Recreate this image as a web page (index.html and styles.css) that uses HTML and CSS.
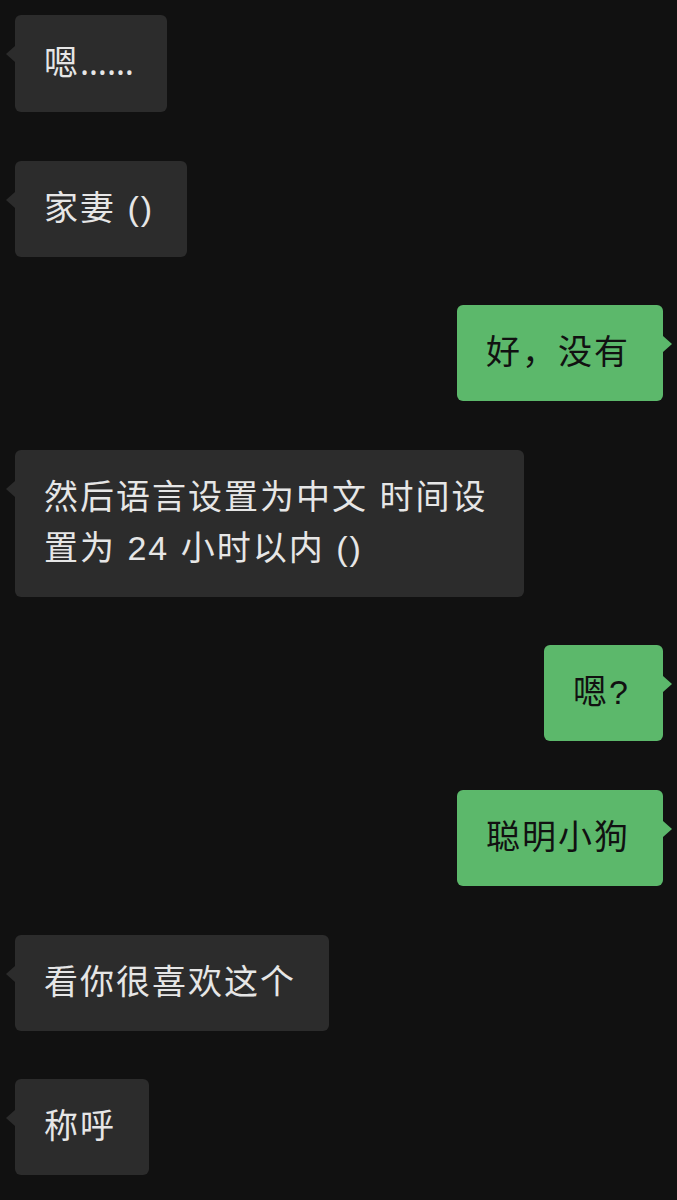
FILE: index.html
```html
<!DOCTYPE html>
<html>
    <head>
        <title>聊天</title>
        <link rel="stylesheet" href="styles.css">
    </head>
    <body>
        <div class="chat">
            <div class="msg left"><div class="bubble">嗯<span class="dots">……</span></div></div>
            <div class="msg left"><div class="bubble">家妻 ()</div></div>
            <div class="msg right"><div class="bubble">好，没有</div></div>
            <div class="msg left"><div class="bubble">然后语言设置为中文 时间设置为 24 小时以内 ()</div></div>
            <div class="msg right"><div class="bubble">嗯?</div></div>
            <div class="msg right"><div class="bubble">聪明小狗</div></div>
            <div class="msg left"><div class="bubble">看你很喜欢这个</div></div>
            <div class="msg left"><div class="bubble">称呼</div></div>
        </div>
    </body>
</html>
```

FILE: styles.css
```css
body {
  margin: 0;
  padding: 0;
  background: #111111;
  font-family: "Liberation Sans", "Noto Sans CJK SC", sans-serif;
  height: 1200px;
  overflow: hidden;
}

.chat {
  display: flex;
  flex-direction: column;
  gap: 48.6px;
  padding: 15px 14px 0 15px;
}

.msg {
  display: flex;
}

.msg.right {
  justify-content: flex-end;
}

.bubble {
  position: relative;
  box-sizing: border-box;
  max-width: 509px;
  padding: 22px 33px 23px 29px;
  border-radius: 6px;
  font-size: 34px;
  line-height: 51px;
  letter-spacing: 2px;
}

.left .bubble {
  background: #2c2c2c;
  color: #e6e6e6;
}

.right .bubble {
  background: #5cb86b;
  color: #111111;
}

.dots {
  font-family: "Noto Sans", sans-serif;
  letter-spacing: 0;
}

/* little tail on the side of each bubble */
.bubble::before {
  content: "";
  position: absolute;
  top: 31px;
  width: 0;
  height: 0;
  border-top: 8px solid transparent;
  border-bottom: 8px solid transparent;
}

.left .bubble::before {
  left: -9px;
  border-right: 9px solid #2c2c2c;
}

.right .bubble::before {
  right: -9px;
  border-left: 9px solid #5cb86b;
}
```
